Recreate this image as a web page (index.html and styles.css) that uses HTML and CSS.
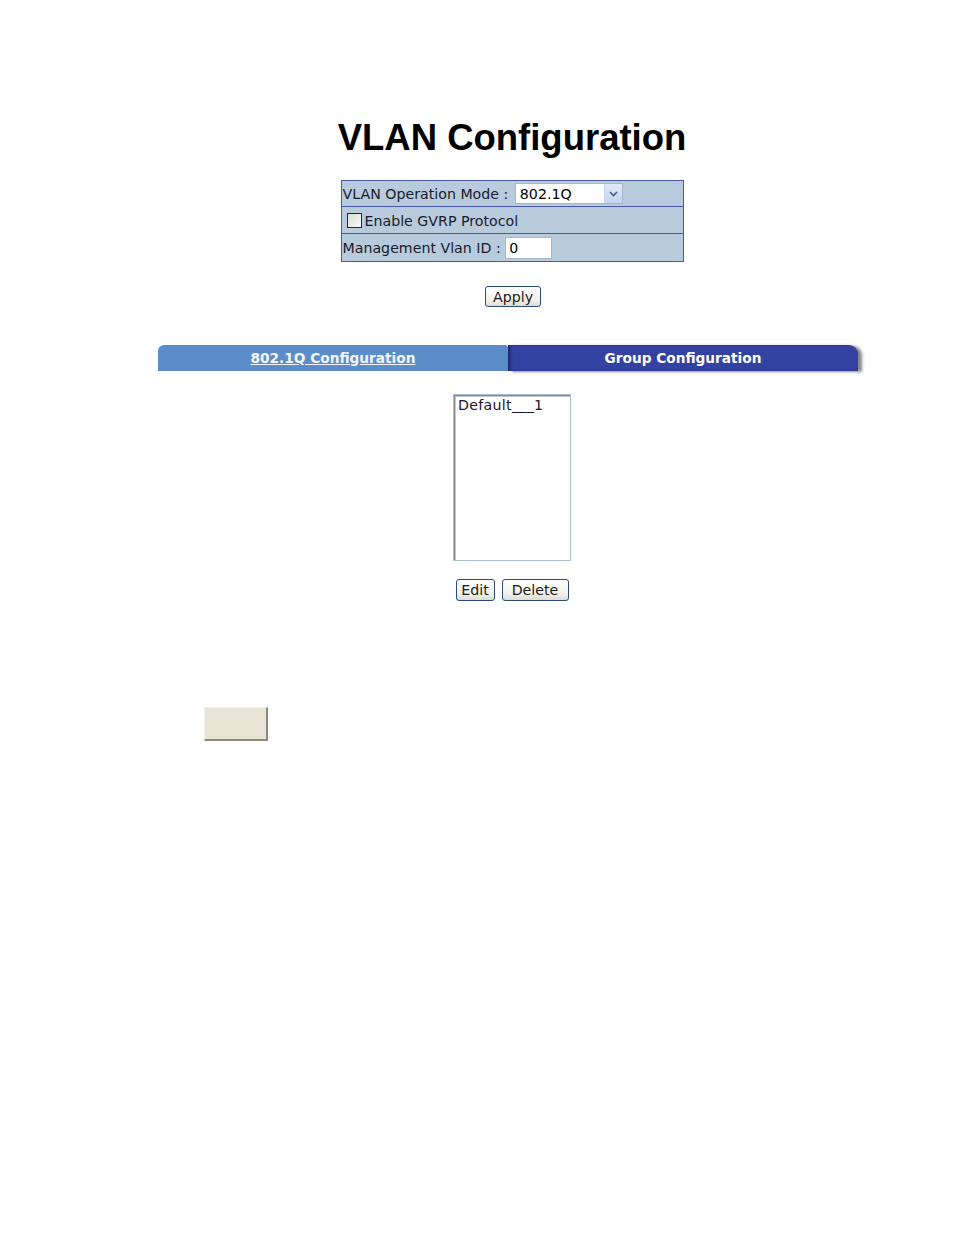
FILE: index.html
```html
<!DOCTYPE html>
<html lang="en">
<head>
<meta charset="utf-8">
<title>VLAN Configuration</title>
<link rel="stylesheet" href="styles.css">
</head>
<body>
<div class="page">
  <h1 class="title">VLAN Configuration</h1>

  <table class="mode-table">
    <tr class="row-1">
      <td>VLAN Operation Mode :
        <span class="select">
          <span class="select-value">802.1Q</span>
          <span class="select-arrow">
            <svg width="9" height="6" viewBox="0 0 9 6"><path d="M1 1 L4.5 4.5 L8 1" fill="none" stroke="#4a5a8a" stroke-width="1.6"/></svg>
          </span>
        </span>
      </td>
    </tr>
    <tr class="row-2">
      <td><span class="checkbox"></span>Enable GVRP Protocol</td>
    </tr>
    <tr class="row-3">
      <td>Management Vlan ID : <span class="text-input">0</span></td>
    </tr>
  </table>

  <div class="apply-row">
    <button class="btn btn-apply">Apply</button>
  </div>

  <div class="tabs">
    <div class="tab tab-left"><a href="#" class="tab-link">802.1Q Configuration</a></div>
    <div class="tab tab-right">Group Configuration</div>
  </div>

  <div class="list-row">
    <div class="listbox">
      <div class="list-item">Default___1</div>
    </div>
  </div>

  <div class="btn-row">
    <button class="btn btn-edit">Edit</button>
    <button class="btn btn-delete">Delete</button>
  </div>

  <div class="blank-box"></div>
</div>
</body>
</html>
```

FILE: styles.css
```css
html, body {
  margin: 0;
  padding: 0;
  background: #ffffff;
}

.page {
  width: 708px;
  margin-left: 158px;
  padding-top: 117px;
  font-family: "DejaVu Sans", Verdana, sans-serif;
  font-size: 14.2px;
  color: #000;
}

.title {
  margin: 0;
  text-align: center;
  font-family: "Liberation Sans", Arial, sans-serif;
  font-weight: bold;
  font-size: 36.5px;
  line-height: 41px;
  height: 41px;
  color: #000;
}

.mode-table {
  margin: 22px auto 0;
  width: 343px;
  border-collapse: collapse;
  border: 1px solid #3c4ba2;
  background: #b7cbdc;
  font-size: 14.2px;
}

.mode-table td {
  border: 1px solid #4a5aa8;
  padding: 2px 0 0 1px;
  white-space: nowrap;
  vertical-align: middle;
  color: #1a1a2a;
}

.row-1 td { height: 23px; }
.row-2 td { height: 24px; }
.row-3 td { height: 25px; }

.select {
  display: inline-flex;
  vertical-align: middle;
  width: 108px;
  height: 21px;
  box-sizing: border-box;
  border: 1px solid #a7b8cc;
  background: #fff;
  margin-left: 2px;
  margin-top: -2px;
  align-items: center;
  justify-content: space-between;
}

.select-value {
  padding-left: 4px;
  color: #000;
}

.select-arrow {
  width: 17px;
  height: 19px;
  background: linear-gradient(#dfe9fb, #c3d3f2);
  border-left: 1px solid #c6d3ea;
  display: flex;
  align-items: center;
  justify-content: center;
}

.checkbox {
  display: inline-block;
  width: 13px;
  height: 13px;
  border: 1px solid #1c2a4a;
  background: linear-gradient(135deg, #dcdcd4, #fbfbf8);
  vertical-align: -2px;
  margin: 0 3px 0 4px;
}

.text-input {
  display: inline-block;
  width: 47px;
  height: 22px;
  box-sizing: border-box;
  border: 1px solid #a7b8cc;
  background: #fff;
  vertical-align: middle;
  margin-top: -2px;
  padding-left: 3px;
  line-height: 20px;
  color: #000;
}

.apply-row {
  margin-top: 24px;
  text-align: center;
}

.btn {
  font-family: "DejaVu Sans", Verdana, sans-serif;
  font-size: 14.2px;
  color: #1a1a1a;
  height: 21px;
  padding: 0;
  border: 1px solid #2c4b7c;
  border-radius: 3px;
  background: linear-gradient(#ffffff, #f1f0ea 70%, #dedcd2);
  line-height: 18px;
  margin: 0;
}

.btn-apply {
  width: 56px;
  position: relative;
  left: 1px;
}

.tabs {
  margin-top: 38px;
  display: flex;
  height: 26px;
}

.tab {
  width: 350px;
  height: 26px;
  display: flex;
  align-items: center;
  justify-content: center;
  font-weight: bold;
  font-size: 13.7px;
  box-sizing: border-box;
  padding-bottom: 1px;
}

.tab-left {
  background: #5b8ec9;
  border-top-left-radius: 6px;
  border-top-right-radius: 3px;
}

.tab-link {
  color: #f4f6fb;
  text-decoration: underline;
}

.tab-right {
  background: #3341a0;
  color: #ffffff;
  border-top-right-radius: 9px;
  box-shadow: 4px 1px 3px rgba(40, 40, 40, 0.55), inset 3px 0 3px -1px rgba(10, 10, 50, 0.5);
}

.list-row {
  margin-top: 23px;
  display: flex;
  justify-content: center;
}

.listbox {
  width: 118px;
  height: 167px;
  box-sizing: border-box;
  border: 1px solid #a9bdd4;
  background: #fff;
  box-shadow: inset 1px 1px 0 #888, inset 2px 2px 0 #c8c8c8;
  padding: 2px 0 0 4px;
}

.list-item {
  color: #1c1030;
  line-height: 17px;
  letter-spacing: 0.3px;
}

.btn-row {
  margin-top: 18px;
  display: flex;
  justify-content: center;
  gap: 7px;
}

.btn-row .btn {
  height: 22px;
}

.btn-edit { width: 39px; }
.btn-delete { width: 67px; }

.blank-box {
  margin-top: 106px;
  margin-left: 46px;
  width: 64px;
  height: 34px;
  background: #e8e4d6;
  border-top: 1px solid #f2f0e8;
  border-left: 1px solid #f2f0e8;
  border-right: 2px solid #8a8a7c;
  border-bottom: 2px solid #8a8a7c;
  box-sizing: border-box;
}
```
